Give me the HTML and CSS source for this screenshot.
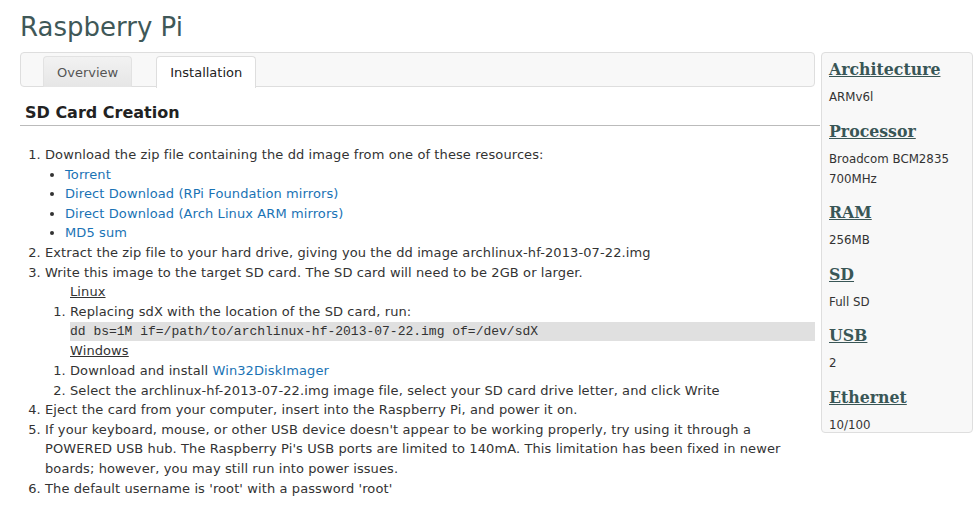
FILE: index.html
```html
<!DOCTYPE html>
<html>
<head>
<meta charset="utf-8">
<title>Raspberry Pi</title>
<link rel="stylesheet" href="styles.css">
</head>
<body>
<h1 class="title">Raspberry Pi</h1>
<div class="layout">
  <div class="main">
    <div class="tabs">
      <a class="tab">Overview</a>
      <a class="tab active">Installation</a>
    </div>
    <h2 class="section">SD Card Creation</h2>
    <ol class="steps">
      <li>Download the zip file containing the dd image from one of these resources:
        <ul class="links">
          <li><a href="#">Torrent</a></li>
          <li><a href="#">Direct Download (RPi Foundation mirrors)</a></li>
          <li><a href="#">Direct Download (Arch Linux ARM mirrors)</a></li>
          <li><a href="#">MD5 sum</a></li>
        </ul>
      </li>
      <li>Extract the zip file to your hard drive, giving you the dd image archlinux-hf-2013-07-22.img</li>
      <li>Write this image to the target SD card. The SD card will need to be 2GB or larger.
        <div class="os"><span class="os-name">Linux</span></div>
        <ol class="sub">
          <li>Replacing sdX with the location of the SD card, run:
            <pre class="code">dd bs=1M if=/path/to/archlinux-hf-2013-07-22.img of=/dev/sdX</pre>
          </li>
        </ol>
        <div class="os"><span class="os-name">Windows</span></div>
        <ol class="sub">
          <li>Download and install <a href="#">Win32DiskImager</a></li>
          <li>Select the archlinux-hf-2013-07-22.img image file, select your SD card drive letter, and click Write</li>
        </ol>
      </li>
      <li>Eject the card from your computer, insert into the Raspberry Pi, and power it on.</li>
      <li>If your keyboard, mouse, or other USB device doesn't appear to be working properly, try using it through a POWERED USB hub. The Raspberry Pi's USB ports are limited to 140mA. This limitation has been fixed in newer boards; however, you may still run into power issues.</li>
      <li>The default username is 'root' with a password 'root'</li>
    </ol>
  </div>
  <div class="side">
    <h3 class="spec-h"><a href="#">Architecture</a></h3>
    <p class="spec-v">ARMv6l</p>
    <h3 class="spec-h"><a href="#">Processor</a></h3>
    <p class="spec-v">Broadcom BCM2835 700MHz</p>
    <h3 class="spec-h"><a href="#">RAM</a></h3>
    <p class="spec-v">256MB</p>
    <h3 class="spec-h"><a href="#">SD</a></h3>
    <p class="spec-v">Full SD</p>
    <h3 class="spec-h"><a href="#">USB</a></h3>
    <p class="spec-v">2</p>
    <h3 class="spec-h"><a href="#">Ethernet</a></h3>
    <p class="spec-v">10/100</p>
  </div>
</div>
</body>
</html>
```

FILE: styles.css
```css
html, body {
  margin: 0;
  padding: 0;
  background: #fff;
}
body {
  font-family: "DejaVu Sans", Verdana, sans-serif;
  font-size: 13px;
  letter-spacing: 0.1px;
  color: #333;
  padding: 0 0 0 20px;
}
a {
  color: #1a73b5;
  text-decoration: none;
}
.title {
  margin: 0;
  padding-top: 11px;
  height: 52px;
  box-sizing: border-box;
  font-size: 26px;
  font-weight: normal;
  letter-spacing: 0;
  line-height: 32px;
  color: #3f5858;
}
.layout {
  display: flex;
  align-items: flex-start;
}
.main {
  width: 800px;
}
.tabs {
  margin-right: 5px;
  height: 35px;
  box-sizing: border-box;
  border: 1px solid #dedede;
  border-radius: 4px;
  background: #f8f8f8;
  padding: 3px 0 0 22px;
  display: flex;
  gap: 24px;
}
.tab {
  display: block;
  height: 31px;
  box-sizing: border-box;
  padding: 0 13px;
  line-height: 31px;
  letter-spacing: 0;
  color: #555;
  border: 1px solid #e2e2e2;
  border-bottom: none;
  border-radius: 4px 4px 0 0;
  background: linear-gradient(#f2f2f2, #e6e6e6);
}
.tab.active {
  color: #222;
  background: #fff;
  border-color: #dedede;
  height: 32px;
}
.section {
  margin: 15px 0 0 0;
  padding: 0 0 1px 5px;
  font-size: 16px;
  line-height: 22px;
  letter-spacing: 0;
  font-weight: bold;
  color: #222;
  border-bottom: 1px solid #bbb;
}
.steps {
  margin: 19px 5px 0 0;
  padding-left: 25px;
  line-height: 19.6px;
}
.links {
  margin: 0;
  padding-left: 20px;
  list-style: disc;
}
.os {
  padding-left: 25px;
}
.os-name {
  text-decoration: underline;
}
.sub {
  margin: 0;
  padding-left: 25px;
}
.code {
  margin: 1px 0 0 0;
  padding: 0;
  background: #e0e0e0;
  font-family: "Liberation Mono", "Courier New", monospace;
  font-size: 13px;
  letter-spacing: 0;
  line-height: 19px;
}
.side {
  margin-left: 1px;
  width: 152px;
  box-sizing: border-box;
  border: 1px solid #dedede;
  border-radius: 4px;
  background: #f8f8f8;
  padding: 4px 7px 0 7px;
}
.spec-h {
  margin: 0;
  font-family: "DejaVu Serif Condensed", "DejaVu Serif", Georgia, serif;
  font-stretch: condensed;
  font-size: 17.5px;
  line-height: 24px;
  letter-spacing: 0;
  font-weight: bold;
}
.spec-h a {
  color: #395656;
  text-decoration: underline;
}
.spec-v {
  margin: 6px 0 11.5px 0;
  font-size: 11.8px;
  letter-spacing: 0;
  line-height: 20px;
  color: #333;
}
.spec-v:last-child {
  margin-bottom: -3px;
}
```
